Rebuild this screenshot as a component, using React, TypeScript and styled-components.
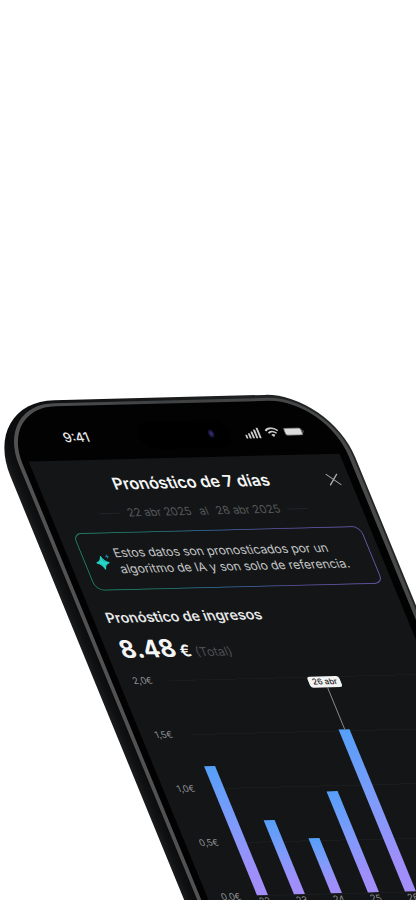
import React from "react";
import styled, { createGlobalStyle } from "styled-components";

const GlobalStyle = createGlobalStyle`
  * { box-sizing: border-box; }
  body {
    margin: 0;
    background: #fff;
    font-family: Inter, "Liberation Sans", sans-serif;
  }
  h1, h2, p { margin: 0; }
`;

const Stage = styled.main`
  height: calc(100vh - 1px);
  padding-top: 402px;
  overflow: hidden;
`;

/* The handset lies tilted on the page, so the whole device is one sheared plane. */
const Phone = styled.div`
  width: 84%;
  padding: 3px 2px 0 13px;
  border-radius: 74px 64px 0 0;
  background: linear-gradient(90deg, #1b1c1d 0, #101112 6px, #0b0c0d 13px, #242526 98%);
  transform-origin: 0 0;
  transform: matrix(1, -0.025, 0.41, 1, -20, 0);
`;

const Rim = styled.div`
  padding: 3px 4px 0;
  border-radius: 60px 61px 0 0;
  background: linear-gradient(90deg, #525253 0, #404142 50%, #484949 100%);
`;

const Bezel = styled.div`
  padding: 0 8px 0 7px;
  border-radius: 56px 57px 0 0;
  background: #020203;
`;

const StatusBar = styled.header`
  display: grid;
  grid-template-columns: 1fr 92px 1fr;
  align-items: center;
  height: 54px;
  padding: 8px 26px 0 44px;
  color: #e8e8e8;
`;

const Clock = styled.time`
  font-size: 13px;
  font-weight: 500;
`;

const Island = styled.div`
  display: flex;
  align-items: center;
  justify-content: flex-end;
  height: 27px;
  padding-right: 16px;
  border-radius: 14px;
  background: #000;
`;

const Lens = styled.span`
  width: 6px;
  height: 8px;
  border-radius: 50%;
  background: radial-gradient(#3b3480, #0c0a20 75%);
`;

const StatusIcons = styled.div`
  display: flex;
  align-items: center;
  justify-content: flex-end;
  gap: 5px;
`;

const Screen = styled.section`
  min-height: 640px;
  padding: 0 9px 0 14px;
  background: #131517;
  color: #f4f5f5;
`;

const TitleRow = styled.div`
  display: grid;
  grid-template-columns: 1fr 24px;
  align-items: center;
  height: 47px;
  margin-right: -4px;
`;

const Title = styled.h1`
  padding-left: 8px;
  font-size: 16px;
  font-weight: 600;
  line-height: 20px;
  text-align: center;
  white-space: nowrap;
`;

const CloseButton = styled.button`
  display: grid;
  place-items: center;
  width: 24px;
  height: 24px;
  margin-top: 3px;
  padding: 0;
  border: 0;
  background: none;
  color: #a9abad;
`;

const DateRow = styled.p`
  display: flex;
  align-items: center;
  justify-content: center;
  gap: 8px;
  margin-bottom: 13px;
  padding-right: 10px;
  color: #55585a;
  font-size: 11px;
  line-height: 12px;
  white-space: nowrap;

  &::before, &::after {
    content: "";
    width: 20px;
    height: 1px;
    background: #222527;
  }
`;

const Notice = styled.div`
  display: flex;
  align-items: center;
  gap: 5px;
  height: 58px;
  padding: 0 11px;
  border: 1px solid transparent;
  border-radius: 9px;
  background:
    linear-gradient(#131517, #131517) padding-box,
    linear-gradient(90deg, #1f7a5c 0, #20695f 22%, #2d5c86 45%, #4b4784 70%, #5f529c 100%) border-box;
`;

const NoticeText = styled.p`
  color: #c3c5c6;
  font-size: 12px;
  line-height: 16px;
  white-space: nowrap;
`;

const Heading = styled.h2`
  margin-top: 18px;
  margin-left: -1px;
  font-size: 14px;
  font-weight: 600;
  line-height: 18px;
  color: #e6e7e7;
`;

const Amount = styled.p`
  display: flex;
  align-items: baseline;
  gap: 4px;
  margin-top: 9px;
  font-size: 24px;
  font-weight: 700;
  line-height: 28px;
`;

const Currency = styled.span`
  font-size: 16px;
  font-weight: 600;
`;

const TotalNote = styled.span`
  color: #4d5053;
  font-size: 12px;
  font-weight: 400;
`;

const Chart = styled.figure`
  display: grid;
  grid-template-columns: 22px 1fr;
  gap: 0 14px;
  margin: 13px -7px 0 0;
`;

const Scale = styled.div`
  display: flex;
  flex-direction: column;
  justify-content: space-between;
  margin: -5px 0;
  color: #909294;
  font-size: 9px;
  line-height: 10px;
`;

const Plot = styled.div`
  display: grid;
  grid-template-columns: repeat(7, 1fr);
  align-items: end;
  height: 216px;
  background: repeating-linear-gradient(#1a1c1e 0 1px, transparent 1px 54px);
  border-bottom: 1px solid #1c1e20;
`;

const Bar = styled.div<{ $value: number }>`
  position: relative;
  width: 11px;
  height: ${({ $value }) => $value * 50}%;
  background: linear-gradient(#559ff8, #7f9bfb 45%, #9d8ffa 80%, #a48dfa);
`;

const Marker = styled.div`
  position: absolute;
  bottom: 100%;
  left: 50%;
  display: flex;
  flex-direction: column;
  align-items: center;
  transform: translateX(-50%);

  &::after {
    content: "";
    width: 1px;
    height: 42px;
    background: #8a8b8d;
  }
`;

const MarkerLabel = styled.span`
  padding: 0 4px;
  border-radius: 3px;
  background: #f4f4f4;
  color: #222;
  font-size: 8px;
  font-weight: 500;
  line-height: 11px;
  white-space: nowrap;
`;

const Days = styled.div`
  grid-column: 2;
  display: grid;
  grid-template-columns: repeat(7, 1fr);
  color: #909294;
  font-size: 9px;
  line-height: 10px;
`;

const ticks = ["2,0€", "1,5€", "1,0€", "0,5€", "0,0€"];

const forecast = [
  { day: 22, value: 1.2 },
  { day: 23, value: 0.69 },
  { day: 24, value: 0.51 },
  { day: 25, value: 0.94 },
  { day: 26, value: 1.51, label: "26 abr" },
  { day: 27, value: 0.4 },
  { day: 28, value: 0.4 },
];

const SignalIcon = () => (
  <svg width="16" height="11" viewBox="0 0 16 11" fill="#c9c9c9" aria-hidden="true">
    <rect x="0" y="7" width="2" height="4" rx="0.6" />
    <rect x="3.3" y="5.5" width="2" height="5.5" rx="0.6" />
    <rect x="6.6" y="4" width="2" height="7" rx="0.6" />
    <rect x="9.9" y="2" width="2" height="9" rx="0.6" />
    <rect x="13.2" y="0" width="2" height="11" rx="0.6" />
  </svg>
);

const WifiIcon = () => (
  <svg width="14" height="10" viewBox="0 0 14 10" fill="none" stroke="#c9c9c9" strokeWidth="1.7" aria-hidden="true">
    <path d="M0.8 3.6C4.4 0.2 9.6 0.2 13.2 3.6" />
    <path d="M3 6.1C5.3 3.9 8.7 3.9 11 6.1" />
    <path d="M7 9.8 5 7.8C6.1 6.8 7.9 6.8 9 7.8Z" fill="#c9c9c9" stroke="none" />
  </svg>
);

const BatteryIcon = () => (
  <svg width="20" height="8" viewBox="0 0 20 8" aria-hidden="true">
    <rect x="0.5" y="0.5" width="17" height="7" rx="1.8" fill="#dcdcdc" stroke="#777" />
    <path d="M18.5 2.5v3c1.2-.4 1.2-2.6 0-3Z" fill="#777" />
  </svg>
);

const SparkIcon = () => (
  <svg width="16" height="18" viewBox="0 0 16 18" aria-hidden="true">
    <path d="M6.5 3.8C7.4 7.7 8.8 9.2 12.8 10.2 8.8 11.2 7.4 12.7 6.5 16.6 5.6 12.7 4.2 11.2.2 10.2 4.2 9.2 5.6 7.7 6.5 3.8Z" fill="#23d6c8" stroke="#23d6c8" strokeLinejoin="round" />
    <path d="M13 1.6C13.4 3.2 13.9 3.7 15.5 4.1 13.9 4.5 13.4 5 13 6.6 12.6 5 12.1 4.5 10.5 4.1 12.1 3.7 12.6 3.2 13 1.6Z" fill="#1f7aa0" />
  </svg>
);

export default function App() {
  return (
    <>
      <GlobalStyle />
      <Stage>
        <Phone>
          <Rim>
            <Bezel>
              <StatusBar>
                <Clock>9:41</Clock>
                <Island><Lens /></Island>
                <StatusIcons>
                  <SignalIcon />
                  <WifiIcon />
                  <BatteryIcon />
                </StatusIcons>
              </StatusBar>
              <Screen>
                <TitleRow>
                  <Title>Pronóstico de 7 días</Title>
                  <CloseButton type="button" aria-label="Cerrar">
                    <svg width="13" height="13" viewBox="0 0 14 14" fill="none" stroke="currentColor" strokeWidth="1.2">
                      <path d="M1 1 13 13M13 1 1 13" />
                    </svg>
                  </CloseButton>
                </TitleRow>
                <DateRow>
                  <span>22 abr 2025</span>
                  <span>al</span>
                  <span>28 abr 2025</span>
                </DateRow>
                <Notice>
                  <SparkIcon />
                  <NoticeText>
                    Estos datos son pronosticados por un
                    <br />
                    algoritmo de IA y son solo de referencia.
                  </NoticeText>
                </Notice>
                <Heading>Pronóstico de ingresos</Heading>
                <Amount>
                  8.48
                  <Currency>€</Currency>
                  <TotalNote>(Total)</TotalNote>
                </Amount>
                <Chart aria-label="Pronóstico de ingresos">
                  <Scale>
                    {ticks.map((tick) => (
                      <span key={tick}>{tick}</span>
                    ))}
                  </Scale>
                  <Plot>
                    {forecast.map(({ day, value, label }) => (
                      <Bar key={day} $value={value}>
                        {label && (
                          <Marker>
                            <MarkerLabel>{label}</MarkerLabel>
                          </Marker>
                        )}
                      </Bar>
                    ))}
                  </Plot>
                  <Days>
                    {forecast.map(({ day }) => (
                      <span key={day}>{day}</span>
                    ))}
                  </Days>
                </Chart>
              </Screen>
            </Bezel>
          </Rim>
        </Phone>
      </Stage>
    </>
  );
}
